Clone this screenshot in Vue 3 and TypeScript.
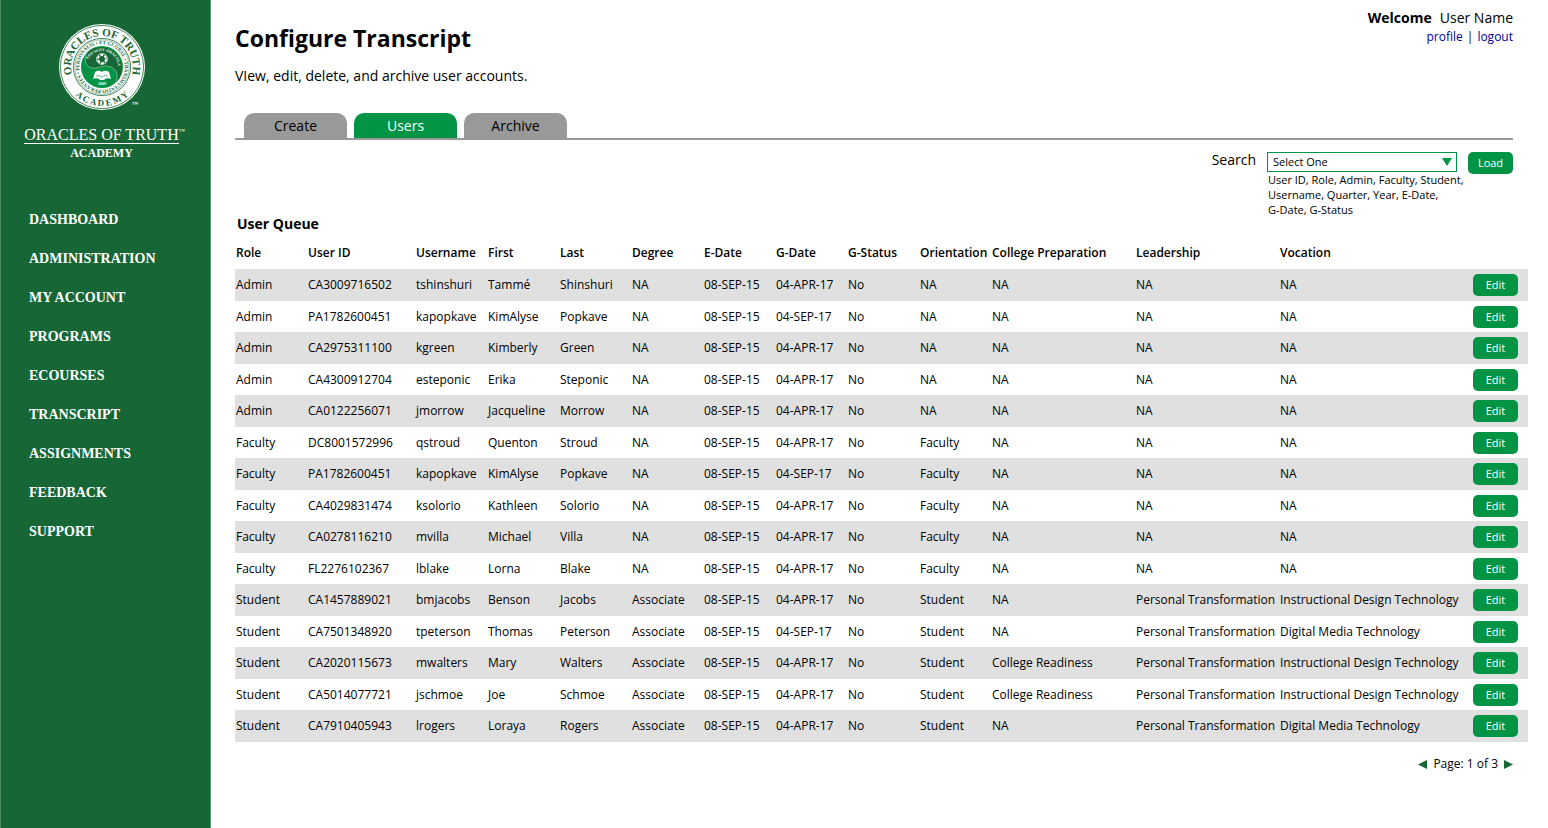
<script setup lang="ts">
import { ref } from 'vue'

interface UserRow {
  role: string
  id: string
  username: string
  first: string
  last: string
  degree: string
  gDate: string
  orientation: string
  prep: string
  leadership: string
  vocation: string
}

const navItems: string[] = [
  'DASHBOARD', 'ADMINISTRATION', 'MY ACCOUNT', 'PROGRAMS', 'ECOURSES',
  'TRANSCRIPT', 'ASSIGNMENTS', 'FEEDBACK', 'SUPPORT',
]

const tabs: string[] = ['Create', 'Users', 'Archive']
const activeTab = ref('Users')
const searchField = ref('')
const searchOptions: string[] = ['User ID', 'Role', 'Username', 'E-Date', 'G-Date', 'G-Status']

const columns: { label: string; key: string }[] = [
  { label: 'Role', key: 'narrow' },
  { label: 'User ID', key: 'id' },
  { label: 'Username', key: 'narrow' },
  { label: 'First', key: 'narrow' },
  { label: 'Last', key: 'narrow' },
  { label: 'Degree', key: 'narrow' },
  { label: 'E-Date', key: 'narrow' },
  { label: 'G-Date', key: 'narrow' },
  { label: 'G-Status', key: 'narrow' },
  { label: 'Orientation', key: 'narrow' },
  { label: 'College Preparation', key: 'wide' },
  { label: 'Leadership', key: 'wide' },
  { label: 'Vocation', key: 'rest' },
]

const PT = 'Personal Transformation'
const IDT = 'Instructional Design Technology'
const DMT = 'Digital Media Technology'

function staff(role: string, id: string, username: string, first: string, last: string, gDate = '04-APR-17'): UserRow {
  return {
    role, id, username, first, last, degree: 'NA', gDate,
    orientation: role === 'Admin' ? 'NA' : role, prep: 'NA', leadership: 'NA', vocation: 'NA',
  }
}

function student(id: string, username: string, first: string, last: string, prep: string, vocation: string, gDate = '04-APR-17'): UserRow {
  return {
    role: 'Student', id, username, first, last, degree: 'Associate', gDate,
    orientation: 'Student', prep, leadership: PT, vocation,
  }
}

const users: UserRow[] = [
  staff('Admin', 'CA3009716502', 'tshinshuri', 'Tammé', 'Shinshuri'),
  staff('Admin', 'PA1782600451', 'kapopkave', 'KimAlyse', 'Popkave', '04-SEP-17'),
  staff('Admin', 'CA2975311100', 'kgreen', 'Kimberly', 'Green'),
  staff('Admin', 'CA4300912704', 'esteponic', 'Erika', 'Steponic'),
  staff('Admin', 'CA0122256071', 'jmorrow', 'Jacqueline', 'Morrow'),
  staff('Faculty', 'DC8001572996', 'qstroud', 'Quenton', 'Stroud'),
  staff('Faculty', 'PA1782600451', 'kapopkave', 'KimAlyse', 'Popkave', '04-SEP-17'),
  staff('Faculty', 'CA4029831474', 'ksolorio', 'Kathleen', 'Solorio'),
  staff('Faculty', 'CA0278116210', 'mvilla', 'Michael', 'Villa'),
  staff('Faculty', 'FL2276102367', 'lblake', 'Lorna', 'Blake'),
  student('CA1457889021', 'bmjacobs', 'Benson', 'Jacobs', 'NA', IDT),
  student('CA7501348920', 'tpeterson', 'Thomas', 'Peterson', 'NA', DMT, '04-SEP-17'),
  student('CA2020115673', 'mwalters', 'Mary', 'Walters', 'College Readiness', IDT),
  student('CA5014077721', 'jschmoe', 'Joe', 'Schmoe', 'College Readiness', IDT),
  student('CA7910405943', 'lrogers', 'Loraya', 'Rogers', 'NA', DMT),
]
</script>

<template>
  <div class="page">
    <aside class="sidebar">
      <div class="brand">
        <svg class="seal" viewBox="-44 -44 88 88" width="88" height="88" role="img" aria-label="Academy seal">
          <defs>
            <path id="arc-top" d="M-3 30.9 A31 31 0 1 1 3 30.9" />
            <path id="arc-bottom" d="M-39 0 A39 39 0 0 0 39 0" />
            <path id="arc-ring" d="M0 22.8 A22.8 22.8 0 0 1 0 -22.8 A22.8 22.8 0 0 1 0 22.8" />
            <path id="arc-disc" d="M-15.5 4 A16 16 0 1 1 15.5 4" />
          </defs>
          <circle r="43" fill="#fff" />
          <circle r="41.6" fill="none" stroke="#166735" stroke-width="0.8" />
          <circle r="28.6" fill="none" stroke="#166735" stroke-width="0.8" />
          <circle r="27.2" fill="none" stroke="#166735" stroke-width="0.4" />
          <circle r="21" fill="#009444" />
          <path d="M-14 -15.6 A21 21 0 0 1 13 16.5 C18 8 14 0 5 -1 C-1 -1 -5 2 -10 1 C-17 -1 -19 -8 -14 -15.6Z" fill="#166735" />
          <path d="M-14 -15.6 C-19 -8 -17 -1 -10 1 C-5 2 -1 -1 5 -1 C14 0 18 8 13 16.5" fill="none" stroke="#7fbd95" stroke-width="0.8" />
          <circle cy="-8" r="4" fill="none" stroke="#fff" stroke-width="2" stroke-dasharray="2.8 1.4" />
          <circle cy="-8" r="5.4" fill="none" stroke="#fff" stroke-width="0.8" />
          <path d="M-9 12 L-7 5 Q-3 2.4 0 5 Q3 2.4 7 5 L9 12 Q4 10 2 13 L-2 13 Q-4 10 -9 12Z" fill="#fff" />
          <path d="M-6 9 Q-3 7.6 0 10 Q3 7.6 6 9" fill="none" stroke="#009444" stroke-width="0.6" />
          <text class="seal-name"><textPath href="#arc-top" startOffset="50%">ORACLES OF TRUTH</textPath></text>
          <text class="seal-sub"><textPath href="#arc-bottom" startOffset="50%">A C A D E M Y</textPath></text>
          <text class="seal-ring"><textPath href="#arc-ring" startOffset="50%">OPERANTES • PERSONALIS • ET GLOBAL • TRANSMUTATIO •</textPath></text>
          <text class="seal-disc"><textPath href="#arc-disc" startOffset="56%">NOS SUNT ORACULA</textPath></text>
          <text class="seal-year" x="0" y="18">2009</text>
          <text class="seal-tm" x="33" y="39">™</text>
        </svg>
        <div class="wordmark">ORACLES OF TRUTH<span class="tm">™</span></div>
        <div class="submark">ACADEMY</div>
      </div>
      <nav class="nav">
        <a v-for="item in navItems" :key="item" href="#">{{ item }}</a>
      </nav>
    </aside>

    <main class="main">
      <header class="header">
        <div>
          <h1>Configure Transcript</h1>
          <p class="intro">VIew, edit, delete, and archive user accounts.</p>
        </div>
        <div class="account">
          <div class="welcome"><strong>Welcome</strong><span>User Name</span></div>
          <div class="links"><a href="#">profile</a><span>|</span><a href="#">logout</a></div>
        </div>
      </header>

      <div class="tabs" role="tablist">
        <button
          v-for="tab in tabs"
          :key="tab"
          type="button"
          role="tab"
          class="tab"
          :class="{ active: tab === activeTab }"
          :aria-selected="tab === activeTab"
          @click="activeTab = tab"
        >{{ tab }}</button>
      </div>

      <div class="toolbar">
        <h2>User Queue</h2>
        <form class="search" @submit.prevent>
          <label for="search-field">Search</label>
          <div class="field">
            <div class="select-box">
              <select id="search-field" v-model="searchField">
                <option value="">Select One</option>
                <option v-for="o in searchOptions" :key="o" :value="o">{{ o }}</option>
              </select>
              <svg class="caret" viewBox="0 0 10 8" width="10" height="8" aria-hidden="true"><path d="M0 0H10L5 8Z" fill="#009444" /></svg>
            </div>
            <p class="hint">User ID, Role, Admin, Faculty, Student,<br>Username, Quarter, Year, E-Date,<br>G-Date, G-Status</p>
          </div>
          <button type="submit" class="btn">Load</button>
        </form>
      </div>

      <table class="queue">
        <colgroup>
          <col v-for="c in columns" :key="c.label" :class="c.key">
          <col class="action">
        </colgroup>
        <thead>
          <tr>
            <th v-for="c in columns" :key="c.label" scope="col">{{ c.label }}</th>
            <td></td>
          </tr>
        </thead>
        <tbody>
          <tr v-for="(u, i) in users" :key="i">
            <td>{{ u.role }}</td>
            <td>{{ u.id }}</td>
            <td>{{ u.username }}</td>
            <td>{{ u.first }}</td>
            <td>{{ u.last }}</td>
            <td>{{ u.degree }}</td>
            <td>08-SEP-15</td>
            <td>{{ u.gDate }}</td>
            <td>No</td>
            <td>{{ u.orientation }}</td>
            <td>{{ u.prep }}</td>
            <td>{{ u.leadership }}</td>
            <td>{{ u.vocation }}</td>
            <td><button type="button" class="btn">Edit</button></td>
          </tr>
        </tbody>
      </table>

      <div class="pager">
        <button type="button" aria-label="Previous page"><svg viewBox="0 0 9 9" width="9" height="9"><path d="M9 0V9L0 4.5Z" fill="#166735" /></svg></button>
        <span>Page: 1 of 3</span>
        <button type="button" aria-label="Next page"><svg viewBox="0 0 9 9" width="9" height="9"><path d="M0 0V9L9 4.5Z" fill="#166735" /></svg></button>
      </div>
    </main>
  </div>
</template>

<style>
body {
  margin: 0;
  background: #fff;
}
</style>

<style scoped>
.page {
  display: flex;
  min-height: 100vh;
  color: #000;
  font-family: "Open Sans", "Noto Sans", sans-serif;
  font-size: 12px;
}

h1, h2, p {
  margin: 0;
}

button, select {
  font-family: inherit;
}

.sidebar {
  flex: 0 0 211px;
  box-sizing: border-box;
  background: #166735;
  border-left: 1px solid #4b8a63;
  border-right: 1px solid #5c9672;
  color: #fff;
  font-family: "Liberation Serif", serif;
}

.brand {
  display: flex;
  flex-direction: column;
  align-items: center;
  padding: 23px 8px 0 0;
}

.seal {
  display: block;
  overflow: visible;
}

.seal text {
  font-family: "Liberation Serif", serif;
  font-weight: bold;
  text-anchor: middle;
  fill: #166735;
}

.seal .seal-name { font-size: 11px; }
.seal .seal-sub { font-size: 9px; }
.seal .seal-ring { font-size: 5px; }
.seal .seal-disc { font-size: 4px; fill: #fff; }
.seal .seal-year { font-size: 4px; fill: #fff; }
.seal .seal-tm { font-size: 6px; fill: #fff; }

.wordmark {
  position: relative;
  margin-top: 15px;
  border-bottom: 1px solid #fff;
  font-size: 16px;
  line-height: 17px;
  white-space: nowrap;
}

.tm {
  position: absolute;
  top: 2px;
  left: 100%;
  font-size: 6px;
  line-height: 6px;
}

.submark {
  margin-top: 2px;
  font-size: 12px;
  font-weight: bold;
  line-height: 14px;
}

.nav {
  display: flex;
  flex-direction: column;
  margin-top: 40px;
  padding-left: 28px;
}

.nav a {
  color: #fff;
  font-size: 14px;
  font-weight: bold;
  line-height: 39px;
  text-decoration: none;
}

.main {
  flex: 1;
  min-width: 0;
  padding: 8px 20px 24px 24px;
}

.header {
  display: flex;
  justify-content: space-between;
  padding-right: 15px;
}

h1 {
  margin-top: 14px;
  font-size: 23px;
  font-weight: 700;
  line-height: 32px;
}

.intro {
  margin-top: 12px;
  font-size: 14px;
  line-height: 20px;
}

.account {
  text-align: right;
}

.welcome {
  display: flex;
  justify-content: flex-end;
  gap: 8px;
  font-size: 14px;
  line-height: 20px;
}

.links {
  display: flex;
  justify-content: flex-end;
  gap: 4px;
  line-height: 18px;
}

.links a {
  color: #00009c;
  text-decoration: none;
}

.tabs {
  display: flex;
  gap: 7px;
  margin: 27px 15px 0 0;
  padding-left: 9px;
  border-bottom: 2px solid #999;
}

.tab {
  width: 103px;
  height: 25px;
  padding: 0;
  border: 0;
  border-radius: 10px 10px 0 0;
  background: #999;
  color: #000;
  font-size: 14px;
  line-height: 25px;
}

.tab.active {
  background: #009444;
  color: #fff;
}

.toolbar {
  display: flex;
  justify-content: space-between;
  align-items: flex-start;
  padding: 12px 15px 0 2px;
}

h2 {
  margin-top: 60px;
  font-size: 14px;
  font-weight: 700;
  line-height: 24px;
}

.search {
  display: flex;
  align-items: flex-start;
}

.search label {
  margin-right: 11px;
  font-size: 14px;
  line-height: 16px;
}

.field {
  width: 201px;
}

.select-box {
  position: relative;
  width: 190px;
}

.select-box select {
  display: block;
  box-sizing: border-box;
  width: 100%;
  height: 20px;
  padding: 0 20px 2px 5px;
  appearance: none;
  border: 1px solid #009444;
  border-radius: 0;
  background: #fff;
  color: #000;
  font-size: 11px;
}

.caret {
  position: absolute;
  top: 6px;
  right: 5px;
  pointer-events: none;
}

.hint {
  padding-left: 1px;
  font-size: 11px;
  line-height: 15px;
  white-space: nowrap;
}

.btn {
  display: block;
  width: 45px;
  height: 22px;
  padding: 0;
  border: 0;
  border-radius: 5px;
  background: #009444;
  color: #fff;
  font-size: 11px;
  line-height: 20px;
}

.queue {
  width: 100%;
  border-collapse: collapse;
  table-layout: fixed;
}

.narrow { width: 72px; }
.id { width: 108px; }
.wide { width: 144px; }
.action { width: 56px; }

.queue th, .queue td {
  padding: 0 0 0 1px;
  line-height: 18px;
  text-align: left;
  white-space: nowrap;
}

.queue th {
  height: 33px;
  font-weight: 600;
}

.queue tbody tr {
  height: 31px;
}

.queue tbody tr:nth-child(odd) {
  height: 32px;
  background: #e0e0e0;
}

.pager {
  display: flex;
  justify-content: flex-end;
  align-items: center;
  gap: 6px;
  margin-top: 12px;
  padding-right: 15px;
  line-height: 20px;
}

.pager button {
  display: block;
  padding: 0;
  border: 0;
  background: none;
}

.pager svg {
  display: block;
}
</style>
